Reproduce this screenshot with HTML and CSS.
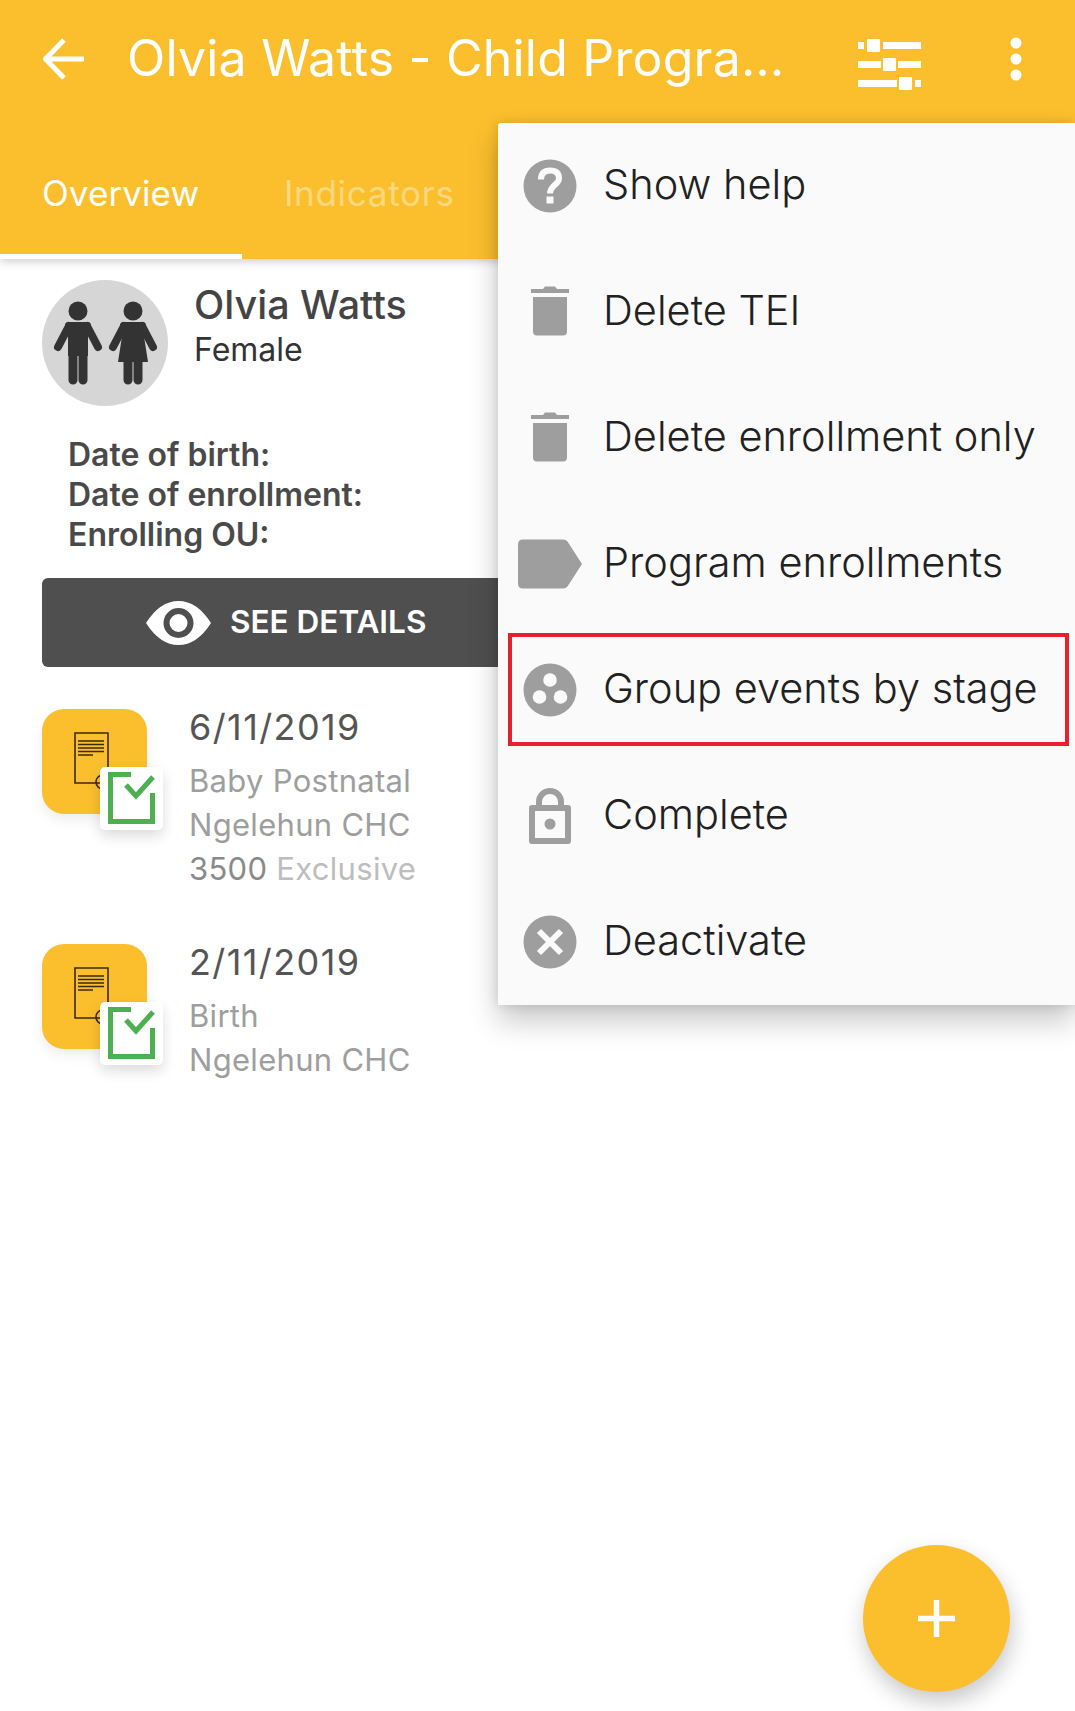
FILE: index.html
```html
<!DOCTYPE html>
<html>

<head>
   <meta name="viewport" content="width=device-width, initial-scale=1.0">
   <title>Olvia Watts - Child Programme</title>
   <link rel="stylesheet" href="styles.css">
</head>

<body>
   <div class="screen">
      <header class="app-header">
         <div class="toolbar">
            <svg class="back-icon" viewBox="0 0 42 42"><path d="M41 21H3M21 2L2.500 21L21 40" /></svg>
            <div class="title">Olvia Watts - Child Progra…</div>
            <svg class="filter-icon" viewBox="0 0 63 51">
               <rect x="0" y="8" width="6" height="7" /><rect x="9" y="5" width="13" height="13" rx="1" /><rect x="25" y="8" width="38" height="7" />
               <rect x="0" y="27" width="23" height="7" /><rect x="25" y="24" width="13" height="13" rx="1" /><rect x="40" y="27" width="23" height="7" />
               <rect x="0" y="46" width="39" height="7" /><rect x="41" y="43" width="13" height="13" rx="1" /><rect x="57" y="46" width="6" height="7" />
            </svg>
            <svg class="more-icon" viewBox="0 0 12 44"><circle cx="6" cy="6" r="5.500" /><circle cx="6" cy="22" r="5.500" /><circle cx="6" cy="38" r="5.500" /></svg>
         </div>
         <nav class="tabs">
            <div class="tab active">Overview</div>
            <div class="tab">Indicators</div>
         </nav>
      </header>

      <main class="content">
         <section class="profile">
            <svg class="avatar" viewBox="0 0 126 126">
               <circle cx="63" cy="63" r="63" fill="#d6d6d6" />
               <g fill="#333" stroke="#333">
                  <circle cx="36" cy="31" r="9.500" stroke="none" />
                  <path d="M27 42H45Q48 42 49 44L47 50H46V76H26V50H25L23 44Q24 42 27 42Z" stroke="none" />
                  <path d="M27 46L16 67M45 46L56 67" stroke-width="8" stroke-linecap="round" fill="none" />
                  <path d="M31 72V100M41 72V100" stroke-width="9" stroke-linecap="round" fill="none" />
                  <circle cx="91" cy="31" r="9.500" stroke="none" />
                  <path d="M82 42H100Q103 42 104 44L102 50H101L106 82H76L81 50H80L78 44Q79 42 82 42Z" stroke="none" />
                  <path d="M82 46L71 67M100 46L111 67" stroke-width="8" stroke-linecap="round" fill="none" />
                  <path d="M86 78V100M96 78V100" stroke-width="9" stroke-linecap="round" fill="none" />
               </g>
            </svg>
            <div class="profile-text">
               <div class="profile-name">Olvia Watts</div>
               <div class="profile-gender">Female</div>
            </div>
         </section>

         <section class="info">
            <div>Date of birth:</div>
            <div>Date of enrollment:</div>
            <div>Enrolling OU:</div>
         </section>

         <button class="details-btn">
            <svg class="eye-icon" viewBox="0 0 65 44">
               <path fill-rule="evenodd" d="M0 22Q14 0 32.500 0T65 22Q51 44 32.500 44T0 22ZM32.500 7A15 15 0 1 0 32.500 37A15 15 0 1 0 32.500 7ZM32.500 13A9 9 0 1 1 32.500 31A9 9 0 1 1 32.500 13Z" />
            </svg>
            <span>SEE DETAILS</span>
         </button>

         <section class="events">
            <article class="event">
               <div class="event-tile">
                  <svg class="doc-icon" viewBox="0 0 42 58">
                     <path d="M2 1H35V51H2ZM5 9H31M5 12.500H31M5 16H31M5 19.500H31M5 23H20" />
                     <circle cx="30" cy="50" r="7" />
                  </svg>
                  <div class="event-badge">
                     <svg viewBox="0 0 63 63"><path d="M31 7.500H10.500V54.500H52.500V26M26 18L36 29L53 10" /></svg>
                  </div>
               </div>
               <div class="event-text">
                  <div class="event-date">6/11/2019</div>
                  <div class="event-stage">Baby Postnatal</div>
                  <div class="event-line">Ngelehun CHC</div>
                  <div class="event-line"><span class="event-value">3500</span> <span class="event-faded">Exclusive</span></div>
               </div>
            </article>
            <article class="event">
               <div class="event-tile">
                  <svg class="doc-icon" viewBox="0 0 42 58">
                     <path d="M2 1H35V51H2ZM5 9H31M5 12.500H31M5 16H31M5 19.500H31M5 23H20" />
                     <circle cx="30" cy="50" r="7" />
                  </svg>
                  <div class="event-badge">
                     <svg viewBox="0 0 63 63"><path d="M31 7.500H10.500V54.500H52.500V26M26 18L36 29L53 10" /></svg>
                  </div>
               </div>
               <div class="event-text">
                  <div class="event-date">2/11/2019</div>
                  <div class="event-stage">Birth</div>
                  <div class="event-line">Ngelehun CHC</div>
               </div>
            </article>
         </section>
      </main>

      <!-- Overflow menu -->
      <ul class="menu">
         <li class="menu-item">
            <svg class="menu-icon" viewBox="0 0 64 53">
               <circle cx="32" cy="26.500" r="26.500" />
               <path class="cut" d="M23 20Q23 11 32 11T41 19C41 25 32 26 32 34" />
               <rect class="hole" x="28.500" y="37" width="7" height="7" />
            </svg>
            <span>Show help</span>
         </li>
         <li class="menu-item">
            <svg class="menu-icon" viewBox="0 0 64 53">
               <path d="M13 3.500H25L27 1H37L39 3.500H51V7.500H13ZM15 11.500H49V46Q49 50 45 50H19Q15 50 15 46Z" />
            </svg>
            <span>Delete TEI</span>
         </li>
         <li class="menu-item">
            <svg class="menu-icon" viewBox="0 0 64 53">
               <path d="M13 3.500H25L27 1H37L39 3.500H51V7.500H13ZM15 11.500H49V46Q49 50 45 50H19Q15 50 15 46Z" />
            </svg>
            <span>Delete enrollment only</span>
         </li>
         <li class="menu-item">
            <svg class="menu-icon" viewBox="0 0 64 53">
               <path d="M5 2H45Q48 2 49.500 4L64 26.500L49.500 49Q48 51 45 51H5Q0 51 0 46V7Q0 2 5 2Z" />
            </svg>
            <span>Program enrollments</span>
         </li>
         <li class="menu-item highlighted">
            <svg class="menu-icon" viewBox="0 0 64 53">
               <circle cx="32" cy="26.500" r="26.500" />
               <circle class="hole" cx="32" cy="16.500" r="6.800" />
               <circle class="hole" cx="21.500" cy="33.500" r="6.800" />
               <circle class="hole" cx="42.500" cy="33.500" r="6.800" />
            </svg>
            <span>Group events by stage</span>
         </li>
         <li class="menu-item">
            <svg class="menu-icon" viewBox="0 0 64 56">
               <path class="lock" d="M21 19V14A11 11 0 0 1 43 14V19M14 20H50V53H14Z" />
               <circle cx="32" cy="36" r="5.500" />
            </svg>
            <span>Complete</span>
         </li>
         <li class="menu-item">
            <svg class="menu-icon" viewBox="0 0 64 53">
               <circle cx="32" cy="26.500" r="26.500" />
               <path class="cut" d="M21 15.500L43 37.500M43 15.500L21 37.500" />
            </svg>
            <span>Deactivate</span>
         </li>
      </ul>

      <button class="fab">
         <svg viewBox="0 0 37 37"><path d="M18.500 0V37M0 18.500H37" /></svg>
      </button>
   </div>
</body>

</html>
```

FILE: styles.css
```css
* {
   box-sizing: border-box;
}

html,
body {
   margin: 0;
   padding: 0;
   background: #fff;
}

body {
   font-family: "Inter", "Roboto", "Liberation Sans", sans-serif;
}

.screen {
   position: relative;
   width: 1075px;
   height: 1711px;
   overflow: hidden;
}

/* Header */
.app-header {
   position: relative;
   z-index: 1;
   height: 259px;
   background-color: #fbbf2d;
   color: #fff;
   box-shadow: 0 3px 8px rgba(0, 0, 0, 0.18);
}

.toolbar {
   display: flex;
   align-items: center;
   height: 118px;
   padding-left: 43px;
}

.back-icon {
   width: 42px;
   height: 42px;
   flex-shrink: 0;
   fill: none;
   stroke: #fff;
   stroke-width: 5;
}

.title {
   width: 654px;
   margin-left: 42px;
   margin-top: -2px;
   font-size: 50px;
   letter-spacing: 0.2px;
   white-space: nowrap;
}

.filter-icon {
   width: 63px;
   height: 51px;
   margin-left: 77px;
   overflow: visible;
   fill: #fff;
}

.more-icon {
   width: 12px;
   height: 44px;
   margin-left: 89px;
   fill: #fff;
}

.tabs {
   display: flex;
   height: 141px;
}

.tab {
   height: 141px;
   padding: 53px 43px 0 42px;
   font-size: 35px;
   letter-spacing: 0.7px;
   line-height: 44px;
   color: rgba(255, 255, 255, 0.4);
   white-space: nowrap;
}

.tab.active {
   width: 242px;
   letter-spacing: 0.1px;
   color: #fff;
   border-bottom: 5px solid #fff;
}

/* Profile */
.profile {
   display: flex;
   gap: 26px;
   padding: 21px 0 0 42px;
}

.avatar {
   display: block;
   width: 126px;
   height: 126px;
}

.profile-name {
   margin-top: 1px;
   font-size: 39.500px;
   font-weight: 500;
   line-height: 48px;
   color: #444;
}

.profile-gender {
   margin-top: 1px;
   font-size: 32px;
   line-height: 40px;
   color: #333;
}

.info {
   margin-top: 29px;
   padding-left: 68px;
   font-size: 32px;
   font-weight: 600;
   line-height: 40px;
   color: #4a4a4a;
}

.details-btn {
   display: flex;
   align-items: center;
   gap: 19px;
   width: 490px;
   height: 89px;
   margin: 23px 0 0 42px;
   padding: 0 0 0 104px;
   border: none;
   border-radius: 6px;
   background-color: #4f4f4f;
   color: #fff;
   font-family: inherit;
   font-size: 31.500px;
   font-weight: 600;
   white-space: nowrap;
}

.details-btn span {
   margin-top: -2px;
}

.eye-icon {
   width: 65px;
   height: 44px;
   fill: #fff;
}

/* Events */
.events {
   margin-top: 42px;
   padding-left: 42px;
}

.event {
   display: flex;
   gap: 42px;
   height: 182px;
   margin-bottom: 53px;
}

.event-tile {
   position: relative;
   width: 105px;
   height: 105px;
   flex-shrink: 0;
   border-radius: 22px;
   background-color: #fbbf2d;
   box-shadow: 0 6px 14px rgba(0, 0, 0, 0.07);
}

.doc-icon {
   position: absolute;
   left: 31px;
   top: 23px;
   width: 42px;
   height: 58px;
   fill: none;
   stroke: #3b2a0c;
   stroke-width: 1.600;
}

.event-badge {
   position: absolute;
   left: 58px;
   top: 58px;
   width: 63px;
   height: 63px;
   border-radius: 5px;
   background-color: #fff;
   box-shadow: 0 6px 14px rgba(0, 0, 0, 0.14);
}

.event-badge svg {
   display: block;
   fill: none;
   stroke: #4caf50;
   stroke-width: 5;
}

.event-text {
   margin-top: -4px;
   white-space: nowrap;
}

.event-date {
   font-size: 36px;
   letter-spacing: 1.400px;
   line-height: 44px;
   color: #555;
}

.event-stage {
   margin-top: 10px;
}

.event-stage,
.event-line {
   font-size: 31px;
   letter-spacing: 0.3px;
   line-height: 44px;
   color: #9e9e9e;
}

.event-value {
   color: #8a8a8a;
}

.event-faded {
   color: #bdbdbd;
}

/* Overflow menu */
.menu {
   position: absolute;
   z-index: 2;
   left: 498px;
   top: 123px;
   width: 577px;
   margin: 0;
   padding: 0;
   list-style: none;
   background-color: #fafafa;
   box-shadow: 0 16px 30px rgba(0, 0, 0, 0.22), 0 0 12px rgba(0, 0, 0, 0.12);
   border-top-left-radius: 3px;
}

.menu-item {
   position: relative;
   display: flex;
   align-items: center;
   height: 126px;
   padding-left: 20px;
   font-size: 41.500px;
   font-weight: 300;
   color: #212121;
   white-space: nowrap;
}

.menu-item span {
   margin-left: 21px;
   margin-top: -4px;
}

.menu-icon {
   width: 64px;
   height: 56px;
   flex-shrink: 0;
   fill: #9e9e9e;
}

.menu-icon .cut {
   fill: none;
   stroke: #fafafa;
   stroke-width: 6;
}

.menu-icon .hole {
   fill: #fafafa;
}

.menu-icon .lock {
   fill: none;
   stroke: #9e9e9e;
   stroke-width: 6;
   stroke-linejoin: round;
}

.highlighted::after {
   content: "";
   position: absolute;
   box-sizing: border-box;
   left: 10px;
   top: 6px;
   width: 561px;
   height: 113px;
   border: 4px solid #e8202e;
}

/* Add button */
.fab {
   position: absolute;
   z-index: 1;
   left: 863px;
   top: 1545px;
   display: flex;
   align-items: center;
   justify-content: center;
   width: 147px;
   height: 147px;
   padding: 0;
   border: none;
   border-radius: 50%;
   background-color: #fbbf2d;
   box-shadow: 2px 10px 22px rgba(0, 0, 0, 0.22);
}

.fab svg {
   width: 37px;
   height: 37px;
   fill: none;
   stroke: #fff;
   stroke-width: 5.500;
}
```
